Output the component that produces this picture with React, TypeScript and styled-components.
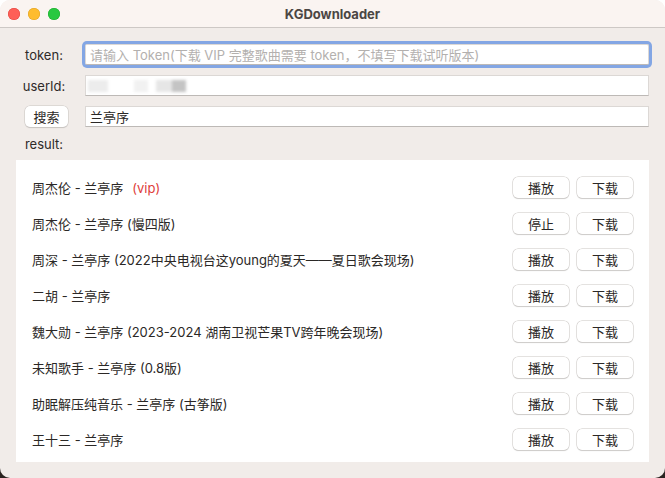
import { createGlobalStyle, styled } from 'styled-components';

const GlobalStyle = createGlobalStyle`
  html, body {
    margin: 0;
    padding: 0;
    width: 665px;
    height: 478px;
    overflow: hidden;
    background: linear-gradient(#ffffff 50%, #2a2320 50%);
  }
  body {
    font-family: Inter, "Noto Sans CJK SC", sans-serif;
    -webkit-font-smoothing: antialiased;
  }
`;

const Window = styled.div`
  width: 665px;
  height: 478px;
  display: flex;
  flex-direction: column;
  background: #f1ece9;
  border-radius: 10px;
  overflow: hidden;
`;

const TitleBar = styled.div`
  height: 28px;
  flex: none;
  display: flex;
  align-items: center;
  position: relative;
  background: #faf4f1;
  border-bottom: 1px solid #cdc8c5;
  box-sizing: border-box;
`;

const Lights = styled.div`
  display: flex;
  gap: 8px;
  padding-left: 8px;
`;

const Light = styled.span<{ $color: string; $edge: string }>`
  width: 12px;
  height: 12px;
  border-radius: 50%;
  background: ${(p) => p.$color};
  box-shadow: inset 0 0 0 0.5px ${(p) => p.$edge};
`;

const Title = styled.div`
  position: absolute;
  left: 0;
  right: 0;
  text-align: center;
  font-size: 13px;
  font-weight: 700;
  color: #4b4644;
`;

const Body = styled.div`
  flex: 1;
  display: flex;
  flex-direction: column;
  padding: 16px 16px 16px 16px;
  min-height: 0;
`;

const Form = styled.div`
  display: grid;
  grid-template-columns: 56px 1fr;
  column-gap: 13px;
  row-gap: 10px;
  align-items: center;
`;

const Label = styled.div`
  font-size: 13px;
  color: #2e2a28;
  text-align: center;
`;

const Input = styled.div<{ $focus?: boolean }>`
  height: 21px;
  box-sizing: border-box;
  background: #fff;
  border: 1px solid #dcd8d5;
  border-bottom-color: #bdb9b6;
  padding: 0 4px;
  display: flex;
  align-items: center;
  font-size: 13px;
  color: #2b2826;
  box-shadow: ${(p) => (p.$focus ? '0 0 0 3px #83a6e4' : 'none')};
  border-radius: ${(p) => (p.$focus ? '2px' : '0')};
`;

const Placeholder = styled.span`
  color: #b3b0ae;
  white-space: nowrap;
`;

const Blur = styled.span`
  display: flex;
  filter: blur(1.5px);
  margin-left: -2px;
`;

const BlurBlock = styled.span<{ $w: number; $c: string }>`
  width: ${(p) => p.$w}px;
  height: 12px;
  background: ${(p) => p.$c};
`;

const Button = styled.button<{ $w?: number }>`
  width: ${(p) => p.$w ?? 56}px;
  height: 21px;
  padding: 0;
  border: none;
  border-radius: 5px;
  background: #fff;
  box-shadow: 0 0 0 0.5px #c9c5c2, 0 1px 1px rgba(0, 0, 0, 0.18);
  font-family: inherit;
  font-size: 13px;
  color: #2b2826;
  display: flex;
  align-items: center;
  justify-content: center;
`;

const SearchCell = styled.div`
  display: flex;
  justify-content: center;
  padding-left: 5px;
`;

const ResultLabel = styled(Label)`
  width: 56px;
  margin-top: 9px;
  line-height: 16px;
`;

const Panel = styled.div`
  flex: 1;
  margin-top: 8px;
  background: #fff;
  padding: 9px 16px 5px 16px;
  display: flex;
  flex-direction: column;
`;

const Row = styled.div`
  height: 36px;
  display: flex;
  align-items: center;
  gap: 8px;
`;

const Name = styled.div`
  flex: 1;
  font-size: 13px;
  color: #2b2826;
  white-space: nowrap;
`;

const Vip = styled.span`
  color: #e0403a;
  margin-left: 9px;
`;

type Song = { name: string; vip?: boolean; playing?: boolean };

const songs: Song[] = [
  { name: '周杰伦 - 兰亭序', vip: true },
  { name: '周杰伦 - 兰亭序 (慢四版)', playing: true },
  { name: '周深 - 兰亭序 (2022中央电视台这young的夏天——夏日歌会现场)' },
  { name: '二胡 - 兰亭序' },
  { name: '魏大勋 - 兰亭序 (2023-2024 湖南卫视芒果TV跨年晚会现场)' },
  { name: '未知歌手 - 兰亭序 (0.8版)' },
  { name: '助眠解压纯音乐 - 兰亭序 (古筝版)' },
  { name: '王十三 - 兰亭序' },
];

const App = () => (
  <>
    <GlobalStyle />
    <Window>
      <TitleBar>
        <Lights>
          <Light $color="#fe5f57" $edge="#e0443e" />
          <Light $color="#febc2e" $edge="#dea123" />
          <Light $color="#28c840" $edge="#1aab29" />
        </Lights>
        <Title>KGDownloader</Title>
      </TitleBar>
      <Body>
        <Form>
          <Label>token:</Label>
          <Input $focus>
            <Placeholder>请输入 Token(下载 VIP 完整歌曲需要 token，不填写下载试听版本)</Placeholder>
          </Input>
          <Label>userId:</Label>
          <Input>
            <Blur>
              <BlurBlock $w={20} $c="#ececec" />
              <BlurBlock $w={26} $c="#ffffff" />
              <BlurBlock $w={14} $c="#f1f1f1" />
              <BlurBlock $w={8} $c="#ffffff" />
              <BlurBlock $w={16} $c="#e6e6e6" />
              <BlurBlock $w={14} $c="#c4c4c4" />
            </Blur>
          </Input>
          <SearchCell>
            <Button $w={43}>搜索</Button>
          </SearchCell>
          <Input>兰亭序</Input>
        </Form>
        <ResultLabel>result:</ResultLabel>
        <Panel>
          {songs.map((s) => (
            <Row key={s.name}>
              <Name>
                {s.name}
                {s.vip && <Vip>(vip)</Vip>}
              </Name>
              <Button>{s.playing ? '停止' : '播放'}</Button>
              <Button>下载</Button>
            </Row>
          ))}
        </Panel>
      </Body>
    </Window>
  </>
);

export default App;
